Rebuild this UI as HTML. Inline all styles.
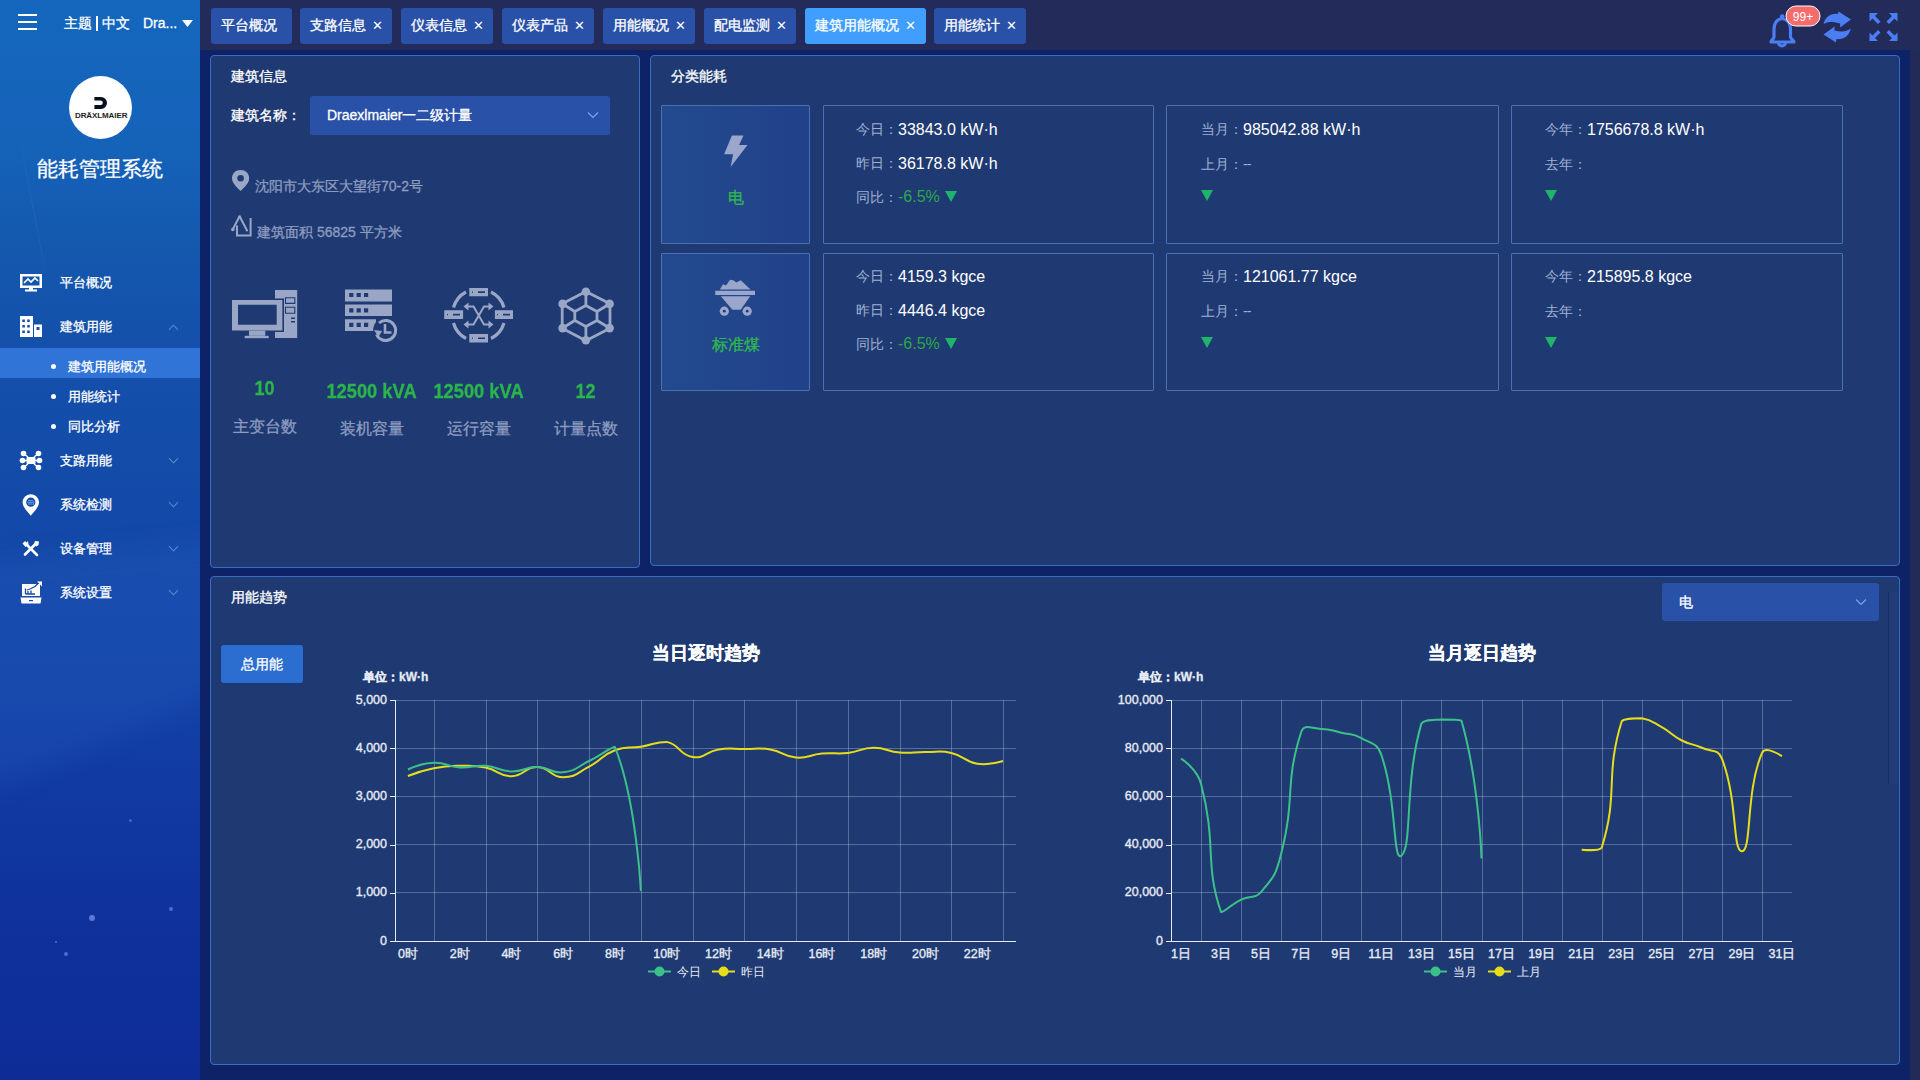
<!DOCTYPE html>
<html><head><meta charset="utf-8">
<style>
*{box-sizing:border-box;margin:0;padding:0}
html,body{width:1920px;height:1080px;overflow:hidden}
body{background:#0e2268;font-family:"Liberation Sans",sans-serif;color:#fff;position:relative}
.abs{position:absolute}
.t,.menu,.sub,.tab{-webkit-text-stroke:0.3px currentColor}
.t.val,.t.lbl,.t.g,.ns{-webkit-text-stroke:0}
#side{left:0;top:0;width:200px;height:1080px;background:linear-gradient(180deg,#1467bd 0px,#1562b9 150px,#1459ae 240px,#1451ab 330px,#134aa9 500px,#1343a6 680px,#1139a2 800px,#0f319c 920px,#0e2c96 1080px);overflow:hidden}
#top{left:200px;top:0;width:1720px;height:50px;background:#222b5a}
#rstrip{left:1910px;top:50px;width:10px;height:1030px;background:#222a58}
.t{position:absolute;white-space:nowrap;line-height:1}
.tab{position:absolute;top:8px;height:36px;background:#2a51a8;border-radius:3px;font-size:14px;line-height:35px;padding-left:10px;color:#fff}
.tab .x{position:absolute;top:0;font-size:13px;-webkit-text-stroke:0}
.tab.on{background:#409eff}
.panel{position:absolute;background:#1f3a72;border:1px solid #3a6cc4;border-radius:4px}
.menu{position:absolute;left:60px;font-size:13px;line-height:1;color:#fff}
.sub{position:absolute;left:68px;font-size:13px;line-height:1;color:#fff}
.dot{position:absolute;left:51px;width:5px;height:5px;border-radius:50%;background:#fff}
.chev{position:absolute;left:170px;width:7px;height:7px;border-right:1px solid #5b86d0;border-bottom:1px solid #5b86d0}
.box{position:absolute;border:1px solid #4a70b6;background:#1f3a72;border-radius:1px}
.lbl{color:#9fb0d2;font-size:14px}
.val{color:#fff;font-size:16px}
.g{color:#2aa84a}
.tri{display:inline-block;width:0;height:0;border-left:6px solid transparent;border-right:6px solid transparent;border-top:11px solid #1eb46a}
svg text{font-family:"Liberation Sans",sans-serif}
.axg text{stroke:#e6ebf5;stroke-width:0.35px}
</style></head><body>

<div id="side" class="abs">
<div class="abs" style="left:34px;top:120px;width:1px;height:190px;background:linear-gradient(180deg,rgba(255,255,255,0),rgba(255,255,255,0.05),rgba(255,255,255,0));transform:rotate(-11deg)"></div>
<div class="abs" style="left:0;top:0;width:200px;height:1080px;filter:blur(12px)"><div class="abs" style="left:-30px;top:540px;width:260px;height:280px;background:rgba(70,140,240,0.10);clip-path:polygon(0 22px,100% 0,100% 150px,0 260px)"></div></div>
<div class="abs" style="left:89px;top:915px;width:6px;height:6px;border-radius:50%;background:rgba(140,170,255,0.6)"></div>
<div class="abs" style="left:169px;top:907px;width:4px;height:4px;border-radius:50%;background:rgba(140,170,255,0.5)"></div>
<div class="abs" style="left:64px;top:952px;width:4px;height:4px;border-radius:50%;background:rgba(140,170,255,0.5)"></div>
<div class="abs" style="left:55px;top:941px;width:2px;height:2px;border-radius:50%;background:rgba(140,170,255,0.5)"></div>
<div class="abs" style="left:129px;top:819px;width:3px;height:3px;border-radius:50%;background:rgba(140,170,255,0.4)"></div>
</div>
<div id="top" class="abs"></div>
<div id="rstrip" class="abs"></div>

<!-- sidebar content -->
<div class="abs" style="left:18px;top:14px;width:19px;height:2px;background:#fff"></div>
<div class="abs" style="left:18px;top:21px;width:19px;height:2px;background:#fff"></div>
<div class="abs" style="left:18px;top:28px;width:19px;height:2px;background:#fff"></div>
<div class="t" style="left:64px;top:16px;font-size:14px">主题</div>
<div class="abs" style="left:96px;top:16px;width:2px;height:15px;background:#fff"></div>
<div class="t" style="left:102px;top:16px;font-size:14px">中文</div>
<div class="t" style="left:143px;top:16px;font-size:14px">Dra...</div>
<svg class="abs" style="left:182px;top:20px" width="11" height="7"><path d="M0 0H11L5.5 7Z" fill="#fff"/></svg>

<div class="abs" style="left:69px;top:76px;width:63px;height:63px;border-radius:50%;background:#fff"></div>
<svg class="abs" style="left:0;top:0" width="140" height="140"><path d="M94.4 97H101A6 6 0 0 1 101 109H94.4V104.9H100.6A2.2 2.2 0 0 0 100.6 100.5H94.4Z" fill="#0a0f1e"/></svg>
<div class="t ns" style="left:75px;top:112px;font-size:8px;font-weight:bold;color:#222;letter-spacing:-0.1px">DRÄXLMAIER</div>
<div class="t" style="left:37px;top:158px;font-size:21px;letter-spacing:0px">能耗管理系统</div>

<div class="abs" style="left:0;top:348px;width:200px;height:30px;background:#2f74d6"></div>
<div class="menu" style="top:276px">平台概况</div>
<div class="menu" style="top:320px">建筑用能</div>
<div class="dot" style="top:364px"></div><div class="sub" style="top:360px">建筑用能概况</div>
<div class="dot" style="top:394px"></div><div class="sub" style="top:390px">用能统计</div>
<div class="dot" style="top:424px"></div><div class="sub" style="top:420px">同比分析</div>
<div class="menu" style="top:454px">支路用能</div>
<div class="menu" style="top:498px">系统检测</div>
<div class="menu" style="top:542px">设备管理</div>
<div class="menu" style="top:586px">系统设置</div>
<div class="chev" style="top:326px;transform:rotate(-135deg)"></div>
<div class="chev" style="top:455px;transform:rotate(45deg)"></div>
<div class="chev" style="top:499px;transform:rotate(45deg)"></div>
<div class="chev" style="top:543px;transform:rotate(45deg)"></div>
<div class="chev" style="top:587px;transform:rotate(45deg)"></div>



<!-- tabs -->
<div class="tab" style="left:211px;width:81px">平台概况</div>
<div class="tab" style="left:300px;width:92px">支路信息<span class="x" style="left:72px">✕</span></div>
<div class="tab" style="left:401px;width:92px">仪表信息<span class="x" style="left:72px">✕</span></div>
<div class="tab" style="left:502px;width:92px">仪表产品<span class="x" style="left:72px">✕</span></div>
<div class="tab" style="left:603px;width:92px">用能概况<span class="x" style="left:72px">✕</span></div>
<div class="tab" style="left:704px;width:92px">配电监测<span class="x" style="left:72px">✕</span></div>
<div class="tab on" style="left:805px;width:121px">建筑用能概况<span class="x" style="left:100px">✕</span></div>
<div class="tab" style="left:934px;width:92px">用能统计<span class="x" style="left:72px">✕</span></div>

<!-- panels -->
<div class="panel" style="left:210px;top:55px;width:430px;height:513px"></div>
<div class="panel" style="left:650px;top:55px;width:1250px;height:511px"></div>
<div class="panel" style="left:210px;top:576px;width:1690px;height:489px"></div>


<!-- building info -->
<div class="t" style="left:231px;top:69px;font-size:14px">建筑信息</div>
<div class="t" style="left:231px;top:108px;font-size:14px">建筑名称：</div>
<div class="abs" style="left:310px;top:96px;width:300px;height:39px;background:#2a51a8;border-radius:3px"></div>
<div class="t" style="left:327px;top:108px;font-size:14px">Draexlmaier一二级计量</div>
<svg class="abs" style="left:587px;top:111px" width="12" height="8"><path d="M1 1.5L6 6.5L11 1.5" fill="none" stroke="#7ea3e6" stroke-width="1.2"/></svg>
<div class="t" style="left:255px;top:179px;font-size:14px;color:#8e9cc0">沈阳市大东区大望街70-2号</div>
<div class="t" style="left:257px;top:225px;font-size:14px;color:#8e9cc0">建筑面积 56825 平方米</div>
<div class="t" style="left:211px;width:107px;text-align:center;top:378px;font-size:20px;font-weight:bold;color:#2ab54b;transform:scaleX(0.9)">10</div>
<div class="t" style="left:318px;width:107px;text-align:center;top:381px;font-size:20px;font-weight:bold;color:#2ab54b;transform:scaleX(0.915)">12500 kVA</div>
<div class="t" style="left:425px;width:107px;text-align:center;top:381px;font-size:20px;font-weight:bold;color:#2ab54b;transform:scaleX(0.915)">12500 kVA</div>
<div class="t" style="left:532px;width:107px;text-align:center;top:381px;font-size:20px;font-weight:bold;color:#2ab54b;transform:scaleX(0.9)">12</div>
<div class="t" style="left:211px;width:107px;text-align:center;top:419px;font-size:16px;color:#8e9cc0">主变台数</div>
<div class="t" style="left:318px;width:107px;text-align:center;top:421px;font-size:16px;color:#8e9cc0">装机容量</div>
<div class="t" style="left:425px;width:107px;text-align:center;top:421px;font-size:16px;color:#8e9cc0">运行容量</div>
<div class="t" style="left:532px;width:107px;text-align:center;top:421px;font-size:16px;color:#8e9cc0">计量点数</div>

<!-- classification -->
<div class="t" style="left:671px;top:69px;font-size:14px">分类能耗</div>
<div class="box" style="left:661px;top:105px;width:149px;height:139px;background:linear-gradient(90deg,#234a8e,#21418a)"></div>
<div class="box" style="left:822.5px;top:105px;width:331.5px;height:139px"></div>
<div class="box" style="left:1166px;top:105px;width:333px;height:139px"></div>
<div class="box" style="left:1511px;top:105px;width:331.5px;height:139px"></div>
<div class="box" style="left:661px;top:252.5px;width:149px;height:138px;background:linear-gradient(90deg,#234a8e,#21418a)"></div>
<div class="box" style="left:822.5px;top:252.5px;width:331.5px;height:138px"></div>
<div class="box" style="left:1166px;top:252.5px;width:333px;height:138px"></div>
<div class="box" style="left:1511px;top:252.5px;width:331.5px;height:138px"></div>

<div class="t" style="left:661px;width:149px;text-align:center;top:190px;font-size:16px;color:#2fb84f">电</div>
<div class="t" style="left:661px;width:149px;text-align:center;top:337px;font-size:16px;color:#2fb84f">标准煤</div>

<div class="t lbl" style="left:856px;top:122px">今日：</div><div class="t val" style="left:898px;top:122px">33843.0 kW·h</div>
<div class="t lbl" style="left:856px;top:156px">昨日：</div><div class="t val" style="left:898px;top:156px">36178.8 kW·h</div>
<div class="t lbl" style="left:856px;top:190px">同比：</div><div class="t g" style="left:898px;top:189px;font-size:16px">-6.5%</div>
<div class="tri abs" style="left:945px;top:191px"></div>

<div class="t lbl" style="left:1201px;top:122px">当月：</div><div class="t val" style="left:1243px;top:122px">985042.88 kW·h</div>
<div class="t lbl" style="left:1201px;top:157px">上月：<span style="letter-spacing:-1px">--</span></div>
<div class="tri abs" style="left:1201px;top:190px"></div>

<div class="t lbl" style="left:1545px;top:122px">今年：</div><div class="t val" style="left:1587px;top:122px">1756678.8 kW·h</div>
<div class="t lbl" style="left:1545px;top:157px">去年：</div>
<div class="tri abs" style="left:1545px;top:190px"></div>

<div class="t lbl" style="left:856px;top:269px">今日：</div><div class="t val" style="left:898px;top:269px">4159.3 kgce</div>
<div class="t lbl" style="left:856px;top:303px">昨日：</div><div class="t val" style="left:898px;top:303px">4446.4 kgce</div>
<div class="t lbl" style="left:856px;top:337px">同比：</div><div class="t g" style="left:898px;top:336px;font-size:16px">-6.5%</div>
<div class="tri abs" style="left:945px;top:338px"></div>

<div class="t lbl" style="left:1201px;top:269px">当月：</div><div class="t val" style="left:1243px;top:269px">121061.77 kgce</div>
<div class="t lbl" style="left:1201px;top:304px">上月：<span style="letter-spacing:-1px">--</span></div>
<div class="tri abs" style="left:1201px;top:337px"></div>

<div class="t lbl" style="left:1545px;top:269px">今年：</div><div class="t val" style="left:1587px;top:269px">215895.8 kgce</div>
<div class="t lbl" style="left:1545px;top:304px">去年：</div>
<div class="tri abs" style="left:1545px;top:337px"></div>

<!-- trend -->
<div class="t" style="left:231px;top:590px;font-size:14px">用能趋势</div>
<div class="abs" style="left:221px;top:645px;width:82px;height:38px;background:#2c6dd0;border-radius:3px"></div>
<div class="t" style="left:221px;width:82px;text-align:center;top:657px;font-size:14px">总用能</div>
<div class="abs" style="left:1662px;top:583px;width:217px;height:38px;background:#2a51a8;border-radius:3px"></div>
<div class="t" style="left:1679px;top:595px;font-size:14px">电</div>
<svg class="abs" style="left:1855px;top:598px" width="12" height="8"><path d="M1 1.5L6 6.5L11 1.5" fill="none" stroke="#7ea3e6" stroke-width="1.2"/></svg>
<div class="abs" style="left:1889px;top:592px;width:9px;height:192px;background:rgba(60,90,150,0.12)"></div><div class="abs" style="left:1888px;top:592px;width:1px;height:192px;background:rgba(20,40,90,0.6)"></div>
<div class="t" style="left:652px;top:644px;font-size:18px;font-weight:bold">当日逐时趋势</div>
<div class="t" style="left:1428px;top:644px;font-size:18px;font-weight:bold">当月逐日趋势</div>
<div class="t" style="left:363px;top:671px;font-size:12px;font-weight:bold;color:#e6ebf5">单位：kW·h</div>
<div class="t" style="left:1138px;top:671px;font-size:12px;font-weight:bold;color:#e6ebf5">单位：kW·h</div>
<svg class="abs" style="left:0;top:0" width="1920" height="1080">
<g stroke="rgba(190,205,235,0.35)" stroke-width="1" shape-rendering="crispEdges"><line x1="395.0" y1="700.0" x2="1016.0" y2="700.0"/><line x1="395.0" y1="748.2" x2="1016.0" y2="748.2"/><line x1="395.0" y1="796.4" x2="1016.0" y2="796.4"/><line x1="395.0" y1="844.6" x2="1016.0" y2="844.6"/><line x1="395.0" y1="892.8" x2="1016.0" y2="892.8"/><line x1="434.4" y1="700.0" x2="434.4" y2="941.0"/><line x1="486.2" y1="700.0" x2="486.2" y2="941.0"/><line x1="537.9" y1="700.0" x2="537.9" y2="941.0"/><line x1="589.7" y1="700.0" x2="589.7" y2="941.0"/><line x1="641.4" y1="700.0" x2="641.4" y2="941.0"/><line x1="693.2" y1="700.0" x2="693.2" y2="941.0"/><line x1="744.9" y1="700.0" x2="744.9" y2="941.0"/><line x1="796.7" y1="700.0" x2="796.7" y2="941.0"/><line x1="848.4" y1="700.0" x2="848.4" y2="941.0"/><line x1="900.2" y1="700.0" x2="900.2" y2="941.0"/><line x1="951.9" y1="700.0" x2="951.9" y2="941.0"/><line x1="1003.7" y1="700.0" x2="1003.7" y2="941.0"/><line x1="1171.0" y1="700.0" x2="1792.0" y2="700.0"/><line x1="1171.0" y1="748.2" x2="1792.0" y2="748.2"/><line x1="1171.0" y1="796.4" x2="1792.0" y2="796.4"/><line x1="1171.0" y1="844.6" x2="1792.0" y2="844.6"/><line x1="1171.0" y1="892.8" x2="1792.0" y2="892.8"/><line x1="1201.5" y1="700.0" x2="1201.5" y2="941.0"/><line x1="1241.6" y1="700.0" x2="1241.6" y2="941.0"/><line x1="1281.7" y1="700.0" x2="1281.7" y2="941.0"/><line x1="1321.7" y1="700.0" x2="1321.7" y2="941.0"/><line x1="1361.8" y1="700.0" x2="1361.8" y2="941.0"/><line x1="1401.9" y1="700.0" x2="1401.9" y2="941.0"/><line x1="1441.9" y1="700.0" x2="1441.9" y2="941.0"/><line x1="1482.0" y1="700.0" x2="1482.0" y2="941.0"/><line x1="1522.1" y1="700.0" x2="1522.1" y2="941.0"/><line x1="1562.1" y1="700.0" x2="1562.1" y2="941.0"/><line x1="1602.2" y1="700.0" x2="1602.2" y2="941.0"/><line x1="1642.3" y1="700.0" x2="1642.3" y2="941.0"/><line x1="1682.3" y1="700.0" x2="1682.3" y2="941.0"/><line x1="1722.4" y1="700.0" x2="1722.4" y2="941.0"/><line x1="1762.5" y1="700.0" x2="1762.5" y2="941.0"/></g>
<g font-size="12.5" fill="#e6ebf5"><g stroke="#e6ebf5" stroke-width="1" class="axg"><line class="ax" x1="395.5" y1="700.0" x2="395.5" y2="941.0"/><line class="ax" x1="395.0" y1="941.5" x2="1016.0" y2="941.5"/><line class="ax" x1="390.0" y1="941.5" x2="395.0" y2="941.5"/><text x="387.0" y="944.5" text-anchor="end">0</text><line class="ax" x1="390.0" y1="893.5" x2="395.0" y2="893.5"/><text x="387.0" y="896.3" text-anchor="end">1,000</text><line class="ax" x1="390.0" y1="845.5" x2="395.0" y2="845.5"/><text x="387.0" y="848.1" text-anchor="end">2,000</text><line class="ax" x1="390.0" y1="796.5" x2="395.0" y2="796.5"/><text x="387.0" y="799.9" text-anchor="end">3,000</text><line class="ax" x1="390.0" y1="748.5" x2="395.0" y2="748.5"/><text x="387.0" y="751.7" text-anchor="end">4,000</text><line class="ax" x1="390.0" y1="700.5" x2="395.0" y2="700.5"/><text x="387.0" y="703.5" text-anchor="end">5,000</text><text x="407.9" y="958.0" text-anchor="middle">0时</text><text x="459.7" y="958.0" text-anchor="middle">2时</text><text x="511.4" y="958.0" text-anchor="middle">4时</text><text x="563.2" y="958.0" text-anchor="middle">6时</text><text x="614.9" y="958.0" text-anchor="middle">8时</text><text x="666.7" y="958.0" text-anchor="middle">10时</text><text x="718.4" y="958.0" text-anchor="middle">12时</text><text x="770.2" y="958.0" text-anchor="middle">14时</text><text x="821.9" y="958.0" text-anchor="middle">16时</text><text x="873.7" y="958.0" text-anchor="middle">18时</text><text x="925.4" y="958.0" text-anchor="middle">20时</text><text x="977.2" y="958.0" text-anchor="middle">22时</text><line class="ax" x1="1171.5" y1="700.0" x2="1171.5" y2="941.0"/><line class="ax" x1="1171.0" y1="941.5" x2="1792.0" y2="941.5"/><line class="ax" x1="1166.0" y1="941.5" x2="1171.0" y2="941.5"/><text x="1163.0" y="944.5" text-anchor="end">0</text><line class="ax" x1="1166.0" y1="893.5" x2="1171.0" y2="893.5"/><text x="1163.0" y="896.3" text-anchor="end">20,000</text><line class="ax" x1="1166.0" y1="845.5" x2="1171.0" y2="845.5"/><text x="1163.0" y="848.1" text-anchor="end">40,000</text><line class="ax" x1="1166.0" y1="796.5" x2="1171.0" y2="796.5"/><text x="1163.0" y="799.9" text-anchor="end">60,000</text><line class="ax" x1="1166.0" y1="748.5" x2="1171.0" y2="748.5"/><text x="1163.0" y="751.7" text-anchor="end">80,000</text><line class="ax" x1="1166.0" y1="700.5" x2="1171.0" y2="700.5"/><text x="1163.0" y="703.5" text-anchor="end">100,000</text><text x="1181.0" y="958.0" text-anchor="middle">1日</text><text x="1221.1" y="958.0" text-anchor="middle">3日</text><text x="1261.1" y="958.0" text-anchor="middle">5日</text><text x="1301.2" y="958.0" text-anchor="middle">7日</text><text x="1341.3" y="958.0" text-anchor="middle">9日</text><text x="1381.3" y="958.0" text-anchor="middle">11日</text><text x="1421.4" y="958.0" text-anchor="middle">13日</text><text x="1461.5" y="958.0" text-anchor="middle">15日</text><text x="1501.5" y="958.0" text-anchor="middle">17日</text><text x="1541.6" y="958.0" text-anchor="middle">19日</text><text x="1581.7" y="958.0" text-anchor="middle">21日</text><text x="1621.7" y="958.0" text-anchor="middle">23日</text><text x="1661.8" y="958.0" text-anchor="middle">25日</text><text x="1701.9" y="958.0" text-anchor="middle">27日</text><text x="1741.9" y="958.0" text-anchor="middle">29日</text><text x="1782.0" y="958.0" text-anchor="middle">31日</text></g></g>
<path d="M407.94 776.01 C407.94 776.01 420.63 770.90 433.81 768.30 C446.50 765.79 446.73 766.00 459.69 765.79 C472.61 765.59 472.96 764.94 485.56 767.48 C498.83 770.15 498.54 776.32 511.44 776.20 C524.41 776.08 524.46 766.75 537.31 767.00 C550.33 767.25 550.28 777.22 563.19 777.22 C576.16 777.12 576.71 773.05 589.06 766.61 C602.59 759.56 600.97 755.57 614.94 750.22 C626.84 745.67 627.93 748.88 640.81 746.80 C653.81 744.71 654.59 741.89 666.69 741.89 C680.46 744.61 678.94 755.02 692.56 757.02 C704.81 758.82 705.24 751.54 718.44 749.50 C731.11 747.54 731.38 749.02 744.31 749.02 C757.25 749.02 757.55 747.41 770.19 749.50 C783.43 751.70 782.90 756.58 796.06 757.60 C808.78 758.58 808.92 754.68 821.94 753.50 C834.80 752.34 835.00 754.33 847.81 752.92 C860.87 751.49 860.73 747.92 873.69 747.81 C886.61 747.71 886.52 751.41 899.56 752.49 C912.40 753.55 912.50 752.00 925.44 752.10 C938.38 752.21 938.89 750.14 951.31 752.92 C964.77 755.94 963.77 761.62 977.19 763.72 C989.64 765.67 1003.06 761.02 1003.06 761.02" fill="none" stroke="#e6dd1a" stroke-width="2"/>
<path d="M407.94 769.50 C407.94 769.50 420.77 763.22 433.81 762.71 C446.64 762.21 446.66 766.70 459.69 767.48 C472.53 768.25 472.76 764.83 485.56 765.79 C498.63 766.78 498.44 771.08 511.44 771.38 C524.32 771.68 524.42 766.77 537.31 767.00 C550.29 767.23 550.68 773.74 563.19 772.30 C576.55 770.76 576.40 767.22 589.06 761.02 C602.27 754.56 610.60 747.00 614.94 747.00 C636.48 801.11 640.81 891.02 640.81 891.02" fill="none" stroke="#3cc08a" stroke-width="2"/>
<path d="M1581.66 849.66 C1581.66 849.66 1598.97 851.35 1601.69 847.73 C1619.01 792.23 1604.43 777.09 1621.73 721.21 C1624.46 718.32 1632.14 718.32 1641.76 718.32 C1652.17 719.88 1652.23 721.94 1661.79 727.23 C1672.26 733.03 1671.20 735.06 1681.82 740.49 C1691.24 745.30 1692.18 743.35 1701.85 747.72 C1712.21 752.39 1718.01 748.53 1721.89 758.56 C1738.04 800.35 1732.18 851.35 1741.92 851.35 C1752.21 849.92 1745.29 792.62 1761.95 753.02 C1765.32 745.02 1781.98 756.15 1781.98 756.15" fill="none" stroke="#e6dd1a" stroke-width="2"/>
<path d="M1181.02 758.56 C1181.02 758.56 1197.05 768.61 1201.05 783.92 C1217.09 845.37 1204.14 863.17 1221.08 912.08 C1224.17 912.08 1230.62 904.85 1241.11 899.55 C1250.65 894.73 1254.48 899.46 1261.15 891.84 C1274.51 876.56 1276.00 874.42 1281.18 853.76 C1296.03 794.53 1284.01 785.66 1301.21 732.05 C1304.04 723.24 1311.26 728.74 1321.24 728.92 C1331.29 729.10 1331.34 730.50 1341.27 732.78 C1351.37 735.08 1352.46 733.18 1361.31 738.08 C1372.49 744.27 1377.27 743.00 1381.34 754.95 C1397.30 801.80 1392.66 862.50 1401.37 855.69 C1412.70 846.83 1404.03 782.66 1421.40 723.62 C1424.06 719.52 1431.33 720.25 1441.44 719.52 C1451.36 719.52 1458.95 719.52 1461.47 720.73 C1478.98 781.50 1481.50 858.58 1481.50 858.58" fill="none" stroke="#3cc08a" stroke-width="2"/>
<!-- legends -->
<line x1="648" y1="971.5" x2="671" y2="971.5" stroke="#3cc08a" stroke-width="2"/><circle cx="659.5" cy="971.5" r="5" fill="#3cc08a"/>
<text x="677" y="976" font-size="12" fill="#e6ebf5">今日</text>
<line x1="712" y1="971.5" x2="735" y2="971.5" stroke="#e6dd1a" stroke-width="2"/><circle cx="723.5" cy="971.5" r="5" fill="#e6dd1a"/>
<text x="741" y="976" font-size="12" fill="#e6ebf5">昨日</text>
<line x1="1424" y1="971.5" x2="1447" y2="971.5" stroke="#3cc08a" stroke-width="2"/><circle cx="1435.5" cy="971.5" r="5" fill="#3cc08a"/>
<text x="1453" y="976" font-size="12" fill="#e6ebf5">当月</text>
<line x1="1488" y1="971.5" x2="1511" y2="971.5" stroke="#e6dd1a" stroke-width="2"/><circle cx="1499.5" cy="971.5" r="5" fill="#e6dd1a"/>
<text x="1517" y="976" font-size="12" fill="#e6ebf5">上月</text>
</svg>

<svg class="abs" style="left:0;top:0" width="1920" height="1080">
<g fill="#fff" stroke="none">
<!-- monitor pulse -->
<path d="M20 274H42V288H20Z M22.5 276.5V285.5H39.5V276.5Z" fill-rule="evenodd"/>
<rect x="29" y="288" width="4" height="2"/><rect x="25" y="289.5" width="12" height="2"/>
<path d="M24 283L28 279L31 282L35 278L38 281" fill="none" stroke="#fff" stroke-width="1.6"/>
<!-- building -->
<path fill-rule="evenodd" d="M20 316H33V337H20Z M22.3 319.5h2.6v2.6h-2.6Z M27.2 319.5h2.6v2.6h-2.6Z M22.3 325h2.6v2.6h-2.6Z M27.2 325h2.6v2.6h-2.6Z M22.3 330.5h2.6v2.6h-2.6Z M27.2 330.5h2.6v2.6h-2.6Z"/>
<path fill-rule="evenodd" d="M34 324.5H42V337H34Z M36.5 327h3v3h-3Z"/>
<!-- branch -->
<rect x="26.5" y="457" width="9" height="7" rx="1"/>
<circle cx="23.5" cy="453.5" r="2.8"/><circle cx="38.5" cy="453.5" r="2.8"/>
<circle cx="22.5" cy="460.5" r="2.8"/><circle cx="39.5" cy="460.5" r="2.8"/>
<circle cx="23.5" cy="467.5" r="2.8"/><circle cx="38.5" cy="467.5" r="2.8"/>
<path d="M23.5 453.5L28 457M38.5 453.5L34 457M23.5 467.5L28 464M38.5 467.5L34 464M22.5 460.5H39.5" stroke="#fff" stroke-width="1.4"/>
<!-- pin -->
<path fill-rule="evenodd" d="M30.8 494.3C26 494.3 22.6 498 22.6 502.5C22.6 506.8 27 511 30.8 515.8C34.6 511 39 506.8 39 502.5C39 498 35.6 494.3 30.8 494.3Z M30.8 497.6A4.6 4.6 0 1 0 30.8 506.8A4.6 4.6 0 1 0 30.8 497.6Z"/>
<path d="M28 500.6H32.5M27.3 502.3H33M28 504H32.3M33 500.5Q34.5 502.3 33 505" stroke="#9fc3ff" stroke-width="0.7" fill="none"/>
<!-- tools -->
<path d="M25.5 543.5L37 555" stroke="#fff" stroke-width="2.6" stroke-linecap="round"/>
<path d="M36.5 543L25 554.5" stroke="#fff" stroke-width="2.6" stroke-linecap="round"/>
<path d="M22.5 543.5L25 541L26.5 542.5L28 541L28.5 544.5L25.5 547Z"/>
<path d="M35 541L39 541.5L38.5 545L36.5 546.5L34 544Z"/>
<!-- laptop chart -->
<path d="M22 584H40V596H22Z"/>
<path d="M20.5 597.5H41.5L40.5 603.5H21.5Z"/>
<path d="M25.5 594V588.5M25.5 594H35M28 593.5V591M31 593.5V590.5M27 590L30 589L35 586.5L39 582.5" stroke="#1848a8" stroke-width="1.3" fill="none"/>
<rect x="29" y="600" width="4" height="1.2" fill="#1848a8"/>
<path d="M37 581.5H42V586.5Z"/>
</g>

<g fill="#9aa6c6">
<!-- pin -->
<path fill-rule="evenodd" d="M240.6 170C235.6 170 232 173.5 232 178.3C232 183 236.5 187 240.6 191C244.7 187 249.2 183 249.2 178.3C249.2 173.5 245.6 170 240.6 170Z M240.6 175A3.3 3.3 0 1 0 240.6 181.6A3.3 3.3 0 1 0 240.6 175Z"/>
<!-- area icon -->
<path d="M239.6 216.3L233 229M239.6 216.3L247.4 231.3M237 225.4V235.6H250.6V218" fill="none" stroke="#9aa6c6" stroke-width="2"/><circle cx="232.8" cy="229.5" r="1.8"/><circle cx="239.6" cy="216.5" r="1.3"/>
<!-- computer -->
<path fill-rule="evenodd" d="M275 290H297.2V338.1H275Z M291 317.5H295V319H291Z M291 321H295V322.5H291Z"/><path d="M285.5 297.8H294.8V303.4H285.5Z M285.5 307.2H294.8V313.3H285.5Z" fill="none" stroke="#1f3a72" stroke-width="1.1"/>
<rect x="230.5" y="298.5" width="53.5" height="33.5" fill="#1f3a72"/>
<path fill-rule="evenodd" d="M232 300H282.4V330.6H232Z M238 304.8V324.8H276.7V304.8Z"/>
<rect x="249" y="330.6" width="16.3" height="5.2"/><rect x="244.7" y="335.8" width="24" height="2.4"/>
<!-- servers -->
<path fill-rule="evenodd" d="M345 289.4H392V301.4H345Z M349.2 292.9h4.2v4.2h-4.2Z M356.6 292.9h4.2v4.2h-4.2Z M364 292.9h4.2v4.2h-4.2Z"/>
<path fill-rule="evenodd" d="M345 304.6H392V316.1H345Z M349.2 308.2h4.2v4.2h-4.2Z M356.6 308.2h4.2v4.2h-4.2Z M364 308.2h4.2v4.2h-4.2Z"/>
<path fill-rule="evenodd" d="M345 319.2H376V331.1H345Z M349.2 322.7h4.2v4.2h-4.2Z M356.6 322.7h4.2v4.2h-4.2Z M364 322.7h4.2v4.2h-4.2Z"/>
<circle cx="386.2" cy="330.2" r="13" fill="#1f3a72"/>
<path d="M376.5 334.5A10 10 0 1 0 379 323" fill="none" stroke="#9aa6c6" stroke-width="3"/>
<path d="M374 330L378.5 337L382 331Z"/>
<path d="M385 324V332.5H391.5" fill="none" stroke="#9aa6c6" stroke-width="2.6"/>
<!-- network -->
<g fill="none" stroke="#9aa6c6" stroke-width="3.2">
<path d="M466 292A25 25 0 0 0 453.5 307.5"/><path d="M491 292A25 25 0 0 1 504 307.5"/>
<path d="M466 338.5A25 25 0 0 1 453.5 323"/><path d="M491 338.5A25 25 0 0 0 504 323"/>
</g>
<path fill-rule="evenodd" d="M469.3 288H488V296.3H469.3Z M478 291.3H485V293H478Z M472 291.5h1v1.2h-1Z"/>
<path fill-rule="evenodd" d="M444.2 310.3H463.1V318.9H444.2Z M453 313.8H460V315.4H453Z M447 314h1v1.2h-1Z"/>
<path fill-rule="evenodd" d="M494.9 310.3H513V318.9H494.9Z M503 313.8H510V315.4H503Z M497 314h1v1.2h-1Z"/>
<path fill-rule="evenodd" d="M469.3 334H488V342.6H469.3Z M478 337.4H485V339H478Z M472 337.6h1v1.2h-1Z"/>
<path d="M468 306.5H473.5L484 324.5H490M468 324.5H473.5L484 306.5H490" fill="none" stroke="#9aa6c6" stroke-width="2"/>
<path d="M463.5 306.5L468.5 302.5V310.5Z M463.5 324.5L468.5 320.5V328.5Z M493.5 306.5L488.5 302.5V310.5Z M493.5 324.5L488.5 320.5V328.5Z"/>
<!-- hexagon -->
<g fill="none" stroke="#9aa6c6" stroke-width="2.8" stroke-linejoin="round">
<path d="M585.9 291.4L610 303.7V328.3L585.9 340.7L562.2 328.3V303.7Z"/>
<path d="M585.9 305.5L597 311.5V320.5L585.9 326.5L574.8 320.5V311.5Z"/>
<path d="M585.9 291.4V305.5M610 303.7L597 311.5M610 328.3L597 320.5M585.9 340.7V326.5M562.2 328.3L574.8 320.5M562.2 303.7L574.8 311.5"/>
</g>
<circle cx="585.9" cy="291.8" r="4.3"/><circle cx="609.6" cy="303.9" r="4.3"/><circle cx="609.6" cy="328.1" r="4.3"/>
<circle cx="585.9" cy="340.3" r="4.3"/><circle cx="562.6" cy="328.1" r="4.3"/><circle cx="562.6" cy="303.9" r="4.3"/>
</g>


<g fill="#9aa6cc">
<path d="M731.9 135.4H743.5L739.1 144.9H747.5L730.6 166.9L733.1 154.2H724.1Z"/>
<path d="M719.8 289.6L723 284.2L726 285.5L730 279.8L733.8 280.6L736.3 282.6L740.7 280.2L750.6 289.6Z"/>
<path d="M715.3 290.8H755V295H715.3Z"/>
<path d="M720.8 296.2H750.2L740.7 309.8H732.4Z"/>
<circle cx="724.3" cy="311.2" r="4.6"/><circle cx="747.2" cy="311.2" r="4.6"/>
</g>
<circle cx="724.3" cy="311.2" r="1.4" fill="#1f3a72"/><circle cx="747.2" cy="311.2" r="1.4" fill="#1f3a72"/>

<!-- top right icons -->
<g fill="none" stroke="#4b7ef2" stroke-width="3.2" stroke-linejoin="round">
<path d="M1782 18.5C1776.5 19.5 1774 24 1774 29.5V37C1774 39 1771 40 1771 42H1794C1794 40 1790.5 39 1790.5 37V29.5C1790.5 24 1788 19.5 1782 18.5Z"/>
<path d="M1778.5 42.5A3.5 3.5 0 0 0 1785.5 42.5"/>
</g>
<circle cx="1782.2" cy="16.5" r="2.3" fill="#4b7ef2"/>
<rect x="1786" y="6" width="34" height="20" rx="10" fill="#f56c6c" stroke="#fff" stroke-width="1"/>
<text x="1803" y="20.5" font-size="12" fill="#fff" text-anchor="middle">99+</text>
<g fill="#4b7ef2">
<path d="M1823.5 24C1825 17 1831 13 1838 14L1838.5 11.5L1851 19.5L1840 27.5L1840.2 23.5C1834 21.5 1828 21 1823.5 24Z"/>
<path d="M1850.8 28.5C1849.5 35.5 1843.5 40 1836.5 39L1836 42.5L1823.5 34.5L1834.5 26.5L1834.5 30.5C1840.5 32 1846.5 32 1850.8 28.5Z"/>
</g>
<g fill="#4b7ef2">
<path d="M1869.5 13H1878L1875 16L1880.5 21.5L1878 24L1872.5 18.5L1869.5 21.5Z"/>
<path d="M1897.5 13H1889L1892 16L1886.5 21.5L1889 24L1894.5 18.5L1897.5 21.5Z"/>
<path d="M1869.5 41H1878L1875 38L1880.5 32.5L1878 30L1872.5 35.5L1869.5 32.5Z"/>
<path d="M1897.5 41H1889L1892 38L1886.5 32.5L1889 30L1894.5 35.5L1897.5 32.5Z"/>
</g>
</svg>
</body></html>
